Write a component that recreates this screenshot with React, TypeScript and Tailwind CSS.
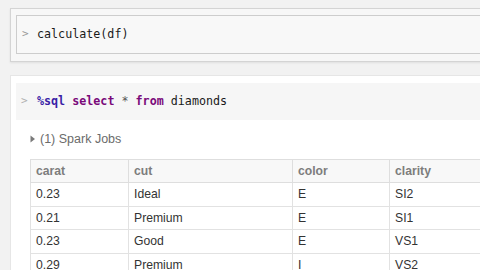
import React from "react";

const mono = { fontFamily: '"DejaVu Sans Mono", "Liberation Mono", monospace' };
const sans = { fontFamily: '"Liberation Sans", Arial, sans-serif' };

const rows = [
  ["0.23", "Ideal", "E", "SI2"],
  ["0.21", "Premium", "E", "SI1"],
  ["0.23", "Good", "E", "VS1"],
  ["0.29", "Premium", "I", "VS2"],
];

export default function App() {
  return (
    <div className="w-[480px] h-[270px] overflow-hidden bg-[#f2f2f2] pt-[8px] pl-[10px]">
      <div className="w-[520px] h-[54px] border border-[#d4d4d4] bg-[#f7f7f7] pt-[6px] pl-[5px] shadow-[0_1px_2px_rgba(0,0,0,0.08)]">
        <div className="h-[39px] border border-[#cdcdcd] bg-[#f8f8f8] flex items-center pl-[5px]">
          <span className="text-[11px] text-[#9a9a9a] w-[15px]" style={mono}>&gt;</span>
          <span className="text-[11.7px] text-[#1a1a1a]" style={mono}>calculate(df)</span>
        </div>
      </div>
      <div className="mt-[13px] w-[520px] h-[220px] border border-[#e6e6e6] bg-white pt-[7px] pl-[5px]">
        <div className="h-[37px] bg-[#f6f6f6] flex items-center pl-[5px]">
          <span className="text-[11px] text-[#b0b0b0] w-[16px]" style={mono}>&gt;</span>
          <span className="text-[11.7px] text-[#1a1a1a] whitespace-pre" style={mono}>
            <span className="font-bold text-[#3a1fa6]">%sql</span>{" "}
            <span className="font-bold text-[#7a0a7a]">select</span>{" "}
            <span className="text-[#555]">*</span>{" "}
            <span className="font-bold text-[#7a0a7a]">from</span> diamonds
          </span>
        </div>
        <div className="flex items-center h-[20px] mt-[9px] pl-[14px] text-[12.5px] text-[#6b6b6b]" style={sans}>
          <svg width="6" height="8" viewBox="0 0 6 8" className="mr-[4px]">
            <path d="M0.5 0.5 L5 4 L0.5 7.5 Z" fill="#7a7a7a" />
          </svg>
          <span>(1) Spark Jobs</span>
        </div>
        <table className="mt-[10px] ml-[14px] border-collapse text-[12.2px]" style={sans}>
          <thead>
            <tr className="h-[23px] bg-[#f8f8f8]">
              <th className="w-[98px] border border-[#dedede] text-left font-bold text-[#7d7d7d] pl-[5px] p-0">carat</th>
              <th className="w-[164px] border border-[#dedede] text-left font-bold text-[#7d7d7d] pl-[5px] p-0">cut</th>
              <th className="w-[97px] border border-[#dedede] text-left font-bold text-[#7d7d7d] pl-[5px] p-0">color</th>
              <th className="w-[120px] border border-[#dedede] text-left font-bold text-[#7d7d7d] pl-[5px] p-0">clarity</th>
            </tr>
          </thead>
          <tbody>
            {rows.map((r, i) => (
              <tr key={i} className="h-[23.5px] bg-white">
                {r.map((c, j) => (
                  <td key={j} className="border border-[#e2e2e2] text-[#333] pl-[5px] p-0">{c}</td>
                ))}
              </tr>
            ))}
          </tbody>
        </table>
      </div>
    </div>
  );
}
